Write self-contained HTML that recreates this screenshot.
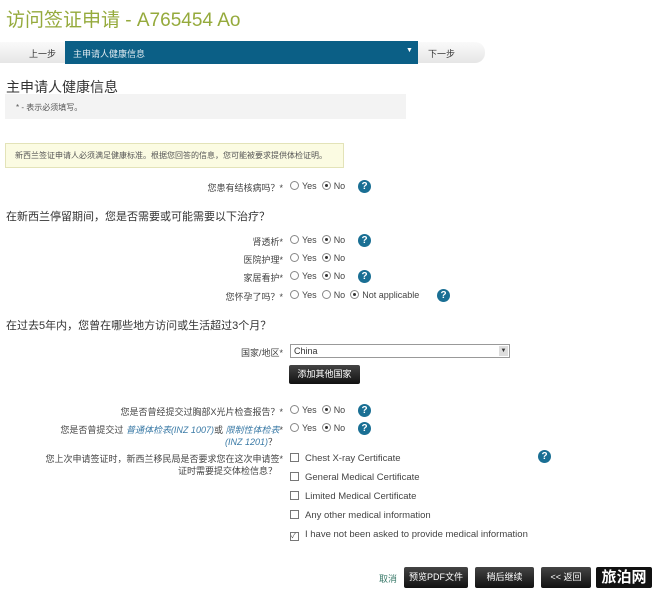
<!DOCTYPE html><html><head><meta charset="utf-8"><style>
body{margin:0;width:672px;height:599px;background:#fff;position:relative;overflow:hidden;font-family:"Liberation Sans","Noto Sans CJK SC",sans-serif;color:#333}
.a{position:absolute;white-space:nowrap}
.s{font-size:9px;color:#444}
.r{display:inline-block;width:7px;height:7px;border:1px solid #888;border-radius:50%;vertical-align:-1px;margin-right:3px;position:relative;background:#fff}
.r.on::after{content:"";position:absolute;left:2px;top:2px;width:3px;height:3px;border-radius:50%;background:#333}
.q{display:inline-block;width:13px;height:13px;border-radius:50%;background:#1a6f94;color:#fff;font-size:10px;font-weight:bold;text-align:center;line-height:13px}
.c{display:inline-block;width:7px;height:7px;border:1px solid #777;background:#fff;vertical-align:-1px;margin-right:6px}
.btn{position:absolute;background:linear-gradient(#444,#111);color:#fff;font-size:9px;text-align:center;border-radius:2px}
</style></head><body>
<div class="a" style="left:6px;top:5px;font-size:19px;color:#95aa3c">访问签证申请 - A765454 Ao</div>
<div class="a" style="left:0;top:42px;width:485px;height:21px;background:linear-gradient(#fafafa,#e6e6e6);border-radius:0 10px 10px 0"></div>
<div class="a s" style="left:29px;top:47px;color:#333">上一步</div>
<div class="a" style="left:65px;top:41px;width:353px;height:23px;background:#0b5f86"></div>
<div class="a" style="left:73px;top:47px;font-size:9px;color:#dfeaf0">主申请人健康信息</div>
<div class="a" style="left:406px;top:47px;font-size:7px;color:#fff">▼</div>
<div class="a s" style="left:428px;top:47px;color:#333">下一步</div>
<div class="a" style="left:6px;top:77px;font-size:14px;color:#333">主申请人健康信息</div>
<div class="a" style="left:5px;top:94px;width:401px;height:25px;background:#f3f3f3"></div>
<div class="a" style="left:16px;top:102px;font-size:8px;color:#555">* - 表示必须填写。</div>
<div class="a" style="left:5px;top:143px;width:337px;height:23px;background:#fbfbe2;border:1px solid #e3e3b8"></div>
<div class="a" style="left:15px;top:150px;font-size:8px;color:#555">新西兰签证申请人必须满足健康标准。根据您回答的信息，您可能被要求提供体检证明。</div>

<div class="a s" style="right:389px;top:181px">您患有结核病吗？*</div>
<div class="a s" style="left:290px;top:181px"><span class="r"></span>Yes &nbsp;<span class="r on"></span>No</div>
<div class="a q" style="left:358px;top:180px">?</div>
<div class="a" style="left:6px;top:208px;font-size:11px">在新西兰停留期间，您是否需要或可能需要以下治疗？</div>
<div class="a s" style="right:389px;top:235px">肾透析*</div>
<div class="a s" style="left:290px;top:235px"><span class="r"></span>Yes &nbsp;<span class="r on"></span>No</div>
<div class="a q" style="left:358px;top:234px">?</div>
<div class="a s" style="right:389px;top:253px">医院护理*</div>
<div class="a s" style="left:290px;top:253px"><span class="r"></span>Yes &nbsp;<span class="r on"></span>No</div>
<div class="a s" style="right:389px;top:271px">家居看护*</div>
<div class="a s" style="left:290px;top:271px"><span class="r"></span>Yes &nbsp;<span class="r on"></span>No</div>
<div class="a q" style="left:358px;top:270px">?</div>
<div class="a s" style="right:389px;top:290px">您怀孕了吗？*</div>
<div class="a s" style="left:290px;top:290px"><span class="r"></span>Yes &nbsp;<span class="r"></span>No &nbsp;<span class="r on"></span>Not applicable</div>
<div class="a q" style="left:437px;top:289px">?</div>
<div class="a" style="left:6px;top:317px;font-size:11px">在过去5年内，您曾在哪些地方访问或生活超过3个月？</div>
<div class="a s" style="right:389px;top:346px">国家/地区*</div>
<div class="a" style="left:290px;top:344px;width:220px;border:1px solid #999;font-size:9px;line-height:12px;padding-left:3px;box-sizing:border-box;height:14px">China<span style="position:absolute;right:1px;top:1px;width:9px;height:10px;background:#ddd;font-size:6px;text-align:center;line-height:10px">▼</span></div>
<div class="btn" style="left:289px;top:365px;width:71px;height:19px;line-height:19px">添加其他国家</div>

<div class="a s" style="right:389px;top:405px">您是否曾经提交过胸部X光片检查报告？*</div>
<div class="a s" style="left:290px;top:405px"><span class="r"></span>Yes &nbsp;<span class="r on"></span>No</div>
<div class="a q" style="left:358px;top:404px">?</div>
<div class="a s" style="right:389px;top:423px">您是否曾提交过 <i style="color:#3a7aa6">普通体检表(INZ 1007)</i>或 <i style="color:#3a7aa6">限制性体检表</i>*</div>
<div class="a s" style="right:395px;top:435px"><i style="color:#3a7aa6">(INZ 1201)</i>？</div>
<div class="a s" style="left:290px;top:423px"><span class="r"></span>Yes &nbsp;<span class="r on"></span>No</div>
<div class="a q" style="left:358px;top:422px">?</div>
<div class="a s" style="right:389px;top:452px">您上次申请签证时，新西兰移民局是否要求您在这次申请签*</div>
<div class="a s" style="right:395px;top:464px">证时需要提交体检信息？</div>
<div class="a s" style="left:290px;top:453px;font-size:9.5px"><span class="c"></span>Chest X-ray Certificate</div>
<div class="a s" style="left:290px;top:472px;font-size:9.5px"><span class="c"></span>General Medical Certificate</div>
<div class="a s" style="left:290px;top:491px;font-size:9.5px"><span class="c"></span>Limited Medical Certificate</div>
<div class="a s" style="left:290px;top:510px;font-size:9.5px"><span class="c"></span>Any other medical information</div>
<div class="a s" style="left:290px;top:529px;font-size:9.5px"><span class="c" style="font-size:7px;line-height:7px">✓</span>I have not been asked to provide medical information</div>
<div class="a q" style="left:538px;top:450px">?</div>
<div class="a" style="left:379px;top:572px;font-size:9px;color:#3a7a6a">取消</div>
<div class="btn" style="left:404px;top:567px;width:64px;height:21px;line-height:21px">预览PDF文件</div>
<div class="btn" style="left:475px;top:567px;width:59px;height:21px;line-height:21px">稍后继续</div>
<div class="btn" style="left:541px;top:567px;width:50px;height:21px;line-height:21px">&lt;&lt; 返回</div>
<div class="btn" style="left:596px;top:567px;width:56px;height:21px;line-height:21px;font-size:15px;font-weight:bold;background:#111">旅泊网</div>
</body></html>
